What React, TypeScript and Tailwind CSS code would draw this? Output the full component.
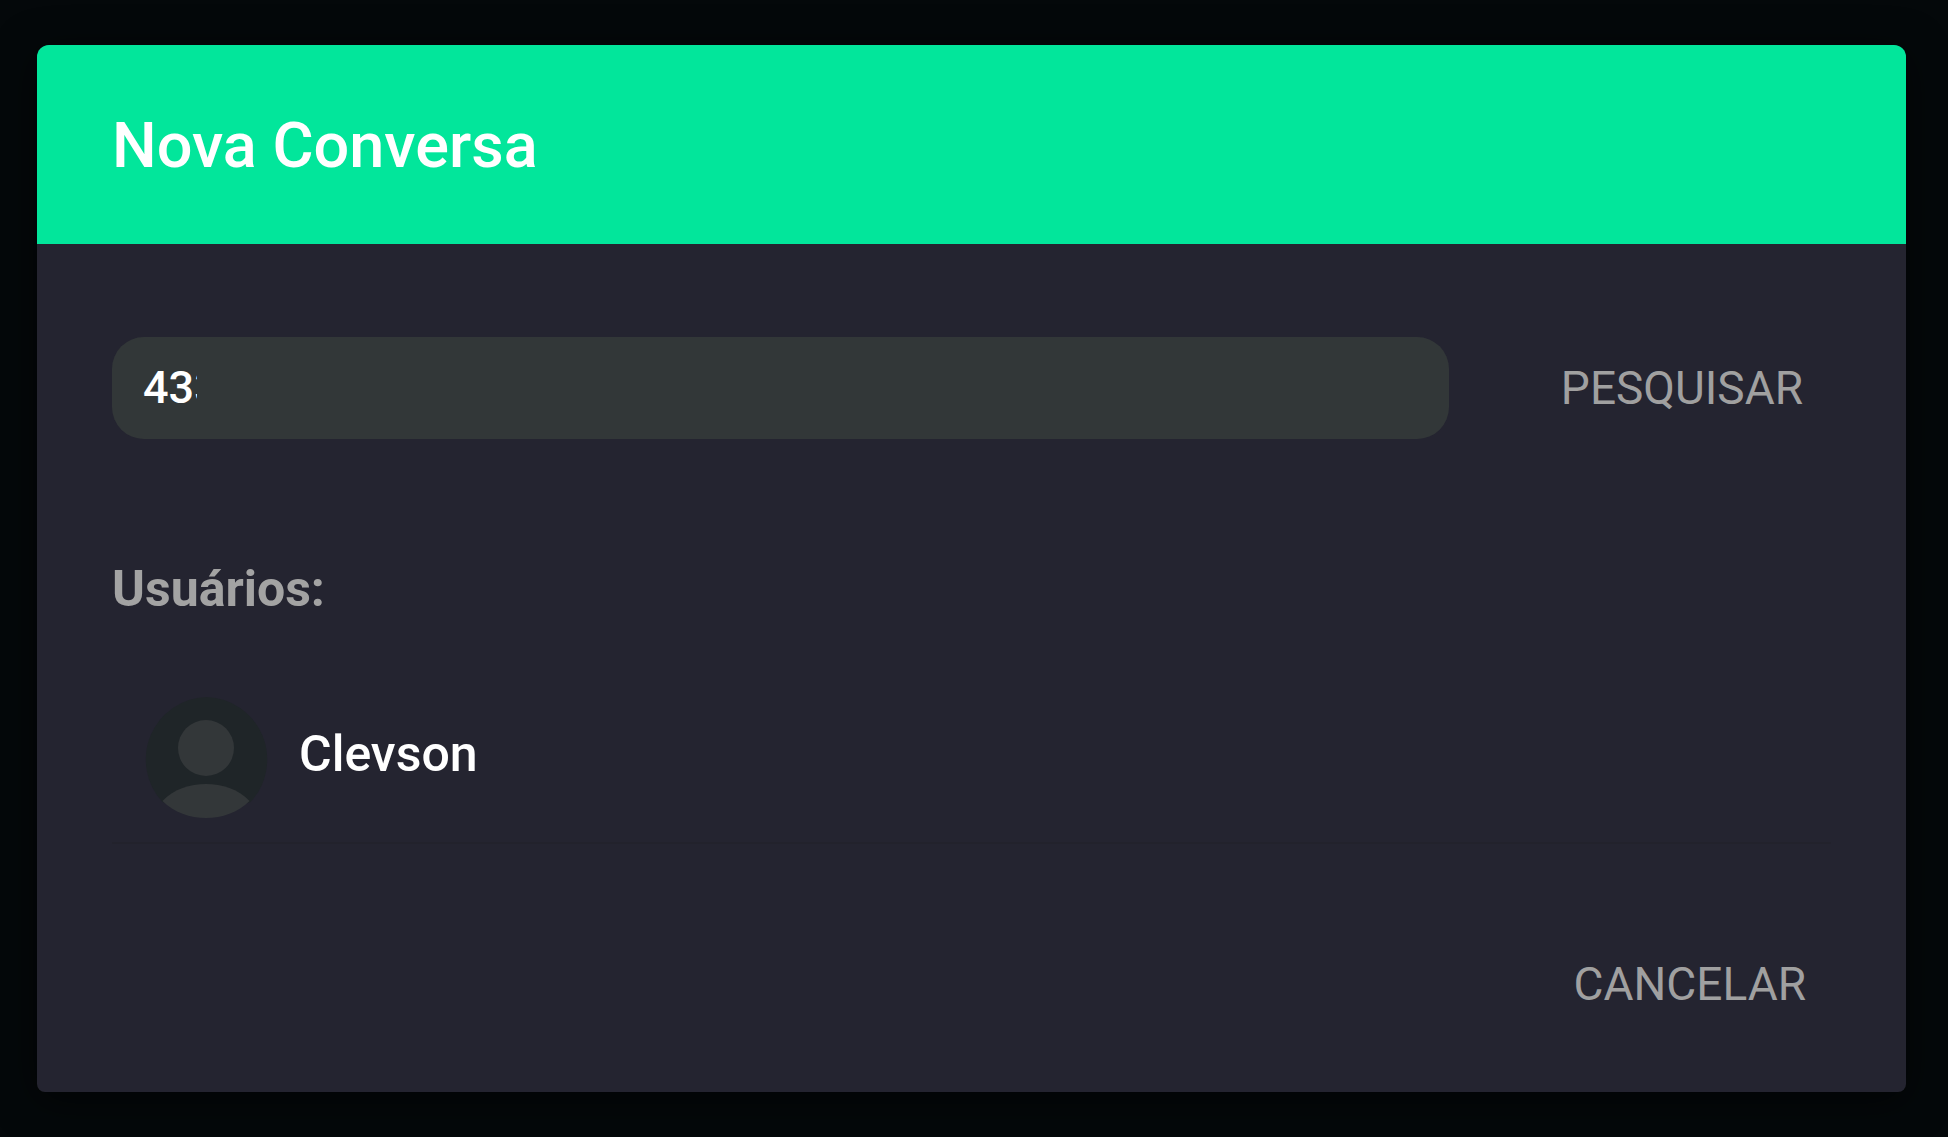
import { useState } from "react";

interface User {
  id: number;
  name: string;
}

const users: User[] = [{ id: 1, name: "Clevson" }];

const DefaultAvatar = () => (
  <svg viewBox="0 0 125 125" className="size-[125px] shrink-0" aria-hidden="true">
    <path
      d="M62.5 0A62.5 62.5 0 0 0 18.5 105C30 110 95 110 106.5 105A62.5 62.5 0 0 0 62.5 0Z"
      fill="#1f2528"
    />
    <circle cx="62" cy="51" r="28" fill="#333739" />
    <path
      d="M18.5 104C30 92 46 87 62 87S94 92 105.500 104C94 115.500 78 121 62 121S30 115.500 18.500 104Z"
      fill="#333739"
    />
  </svg>
);

const UserItem = ({ user }: { user: User }) => (
  <li className="border-b-2 border-[#22222c]">
    <button className="flex w-full items-center gap-[30px] px-8 py-5 text-left">
      <DefaultAvatar />
      <span className="pb-3 text-[50px] leading-[60px] font-medium text-white">
        {user.name}
      </span>
    </button>
  </li>
);

export default function App() {
  const [search, setSearch] = useState("433");

  return (
    <div className="min-h-screen bg-[#04080a] pt-[45px] pr-[42px] pb-[45px] pl-[37px] font-[Roboto,sans-serif]">
      <div
        role="dialog"
        aria-labelledby="dialog-title"
        className="overflow-hidden rounded-t-xl rounded-b-lg bg-[#242430] shadow-[0_8px_40px_rgba(0,0,0,0.6)]"
      >
        <header className="bg-[#02e69b] px-[75px] pt-[51px] pb-12">
          <h2
            id="dialog-title"
            className="text-[63px] leading-[100px] font-medium text-white"
          >
            Nova Conversa
          </h2>
        </header>

        <div className="px-[75px] pt-[93px]">
          <form
            className="flex items-center"
            onSubmit={(e) => e.preventDefault()}
          >
            <label className="flex h-[102px] flex-1 items-center rounded-[32px] bg-[#323738] px-[31px]">
              <input
                aria-label="Pesquisar usuário"
                className="w-[54px] bg-transparent text-[45px] leading-[60px] font-medium text-white outline-none"
                value={search}
                onChange={(e) => setSearch(e.target.value)}
              />
            </label>
            <button
              type="submit"
              className="ml-[84px] px-7 text-[46px] leading-[60px] text-[#a0a0a0] uppercase"
            >
              Pesquisar
            </button>
          </form>

          <h3 className="mt-[120px] text-[50px] leading-[60px] font-bold text-[#a3a3a3]">
            Usuários:
          </h3>
          <ul className="mt-[58px]">
            {users.map((user) => (
              <UserItem key={user.id} user={user} />
            ))}
          </ul>
        </div>

        <div className="flex justify-end px-[75px] pt-[110px] pb-[78px]">
          <button className="px-[25px] text-[46px] leading-[60px] text-[#a0a0a0] uppercase">
            Cancelar
          </button>
        </div>
      </div>
    </div>
  );
}
